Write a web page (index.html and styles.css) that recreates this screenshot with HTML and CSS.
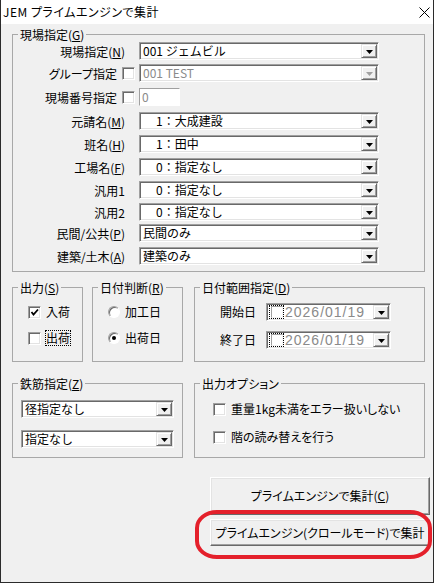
FILE: index.html
```html
<!DOCTYPE html>
<html lang="ja">
<head>
<meta charset="utf-8">
<title>JEM プライムエンジンで集計</title>
<link rel="stylesheet" href="styles.css">
</head>
<body>
<div class="window">
  <div class="titlebar">
    <span class="title">JEM プライムエンジンで集計</span>
    <svg class="close" width="11" height="11" viewBox="0 0 11 11"><path d="M0.5 0.5 L10.5 10.5 M10.5 0.5 L0.5 10.5" stroke="#000" stroke-width="1" fill="none"/></svg>
  </div>
  <div class="client">
    <fieldset class="grp g-site">
      <legend>現場指定(<u>G</u>)</legend>
      <div class="fgrid">
        <div class="lab">現場指定(<u>N</u>)</div>
        <div class="combo"><span class="ctext">001 ジェムビル</span><span class="drop"><svg width="7" height="4" viewBox="0 0 7 4"><polygon points="0,0 7,0 3.5,4" fill="#000"/></svg></span></div>

        <div class="lab lab-chk">グループ指定<span class="chk"></span></div>
        <div class="combo disabled"><span class="ctext">001 TEST</span><span class="drop"><svg width="7" height="4" viewBox="0 0 7 4"><polygon points="0,0 7,0 3.5,4" fill="#a0a0a0"/></svg></span></div>

        <div class="lab lab-chk">現場番号指定<span class="chk"></span></div>
        <div class="edit"><span class="etext">0</span></div>

        <div class="lab">元請名(<u>M</u>)</div>
        <div class="combo"><span class="ctext ind">1：大成建設</span><span class="drop"><svg width="7" height="4" viewBox="0 0 7 4"><polygon points="0,0 7,0 3.5,4" fill="#000"/></svg></span></div>

        <div class="lab">班名(<u>H</u>)</div>
        <div class="combo"><span class="ctext ind">1：田中</span><span class="drop"><svg width="7" height="4" viewBox="0 0 7 4"><polygon points="0,0 7,0 3.5,4" fill="#000"/></svg></span></div>

        <div class="lab">工場名(<u>F</u>)</div>
        <div class="combo"><span class="ctext ind">0：指定なし</span><span class="drop"><svg width="7" height="4" viewBox="0 0 7 4"><polygon points="0,0 7,0 3.5,4" fill="#000"/></svg></span></div>

        <div class="lab">汎用1</div>
        <div class="combo"><span class="ctext ind">0：指定なし</span><span class="drop"><svg width="7" height="4" viewBox="0 0 7 4"><polygon points="0,0 7,0 3.5,4" fill="#000"/></svg></span></div>

        <div class="lab">汎用2</div>
        <div class="combo"><span class="ctext ind">0：指定なし</span><span class="drop"><svg width="7" height="4" viewBox="0 0 7 4"><polygon points="0,0 7,0 3.5,4" fill="#000"/></svg></span></div>

        <div class="lab">民間/公共(<u>P</u>)</div>
        <div class="combo"><span class="ctext">民間のみ</span><span class="drop"><svg width="7" height="4" viewBox="0 0 7 4"><polygon points="0,0 7,0 3.5,4" fill="#000"/></svg></span></div>

        <div class="lab">建築/土木(<u>A</u>)</div>
        <div class="combo"><span class="ctext">建築のみ</span><span class="drop"><svg width="7" height="4" viewBox="0 0 7 4"><polygon points="0,0 7,0 3.5,4" fill="#000"/></svg></span></div>
      </div>
    </fieldset>

    <div class="grow row2">
      <fieldset class="grp g-out">
        <legend>出力(<u>S</u>)</legend>
        <div class="opts opts-out">
          <div class="opt"><span class="chk"><svg width="9" height="9" viewBox="0 0 9 9"><polyline points="1.5,4 3.5,6.5 8,1.5" fill="none" stroke="#000" stroke-width="1.8"/></svg></span><span class="otext">入荷</span></div>
          <div class="opt"><span class="chk"></span><span class="otext focus">出荷</span></div>
        </div>
      </fieldset>
      <fieldset class="grp g-judge">
        <legend>日付判断(<u>R</u>)</legend>
        <div class="opts opts-out">
          <div class="opt"><span class="radio"></span><span class="otext">加工日</span></div>
          <div class="opt"><span class="radio on"></span><span class="otext">出荷日</span></div>
        </div>
      </fieldset>
      <fieldset class="grp g-range">
        <legend>日付範囲指定(<u>D</u>)</legend>
        <div class="opts opts-range">
          <div class="drow"><span class="dlab">開始日</span>
            <div class="dtp"><span class="dfocus"><span class="dchk"></span></span><span class="dtext">2026/01/19</span><span class="drop"><svg width="7" height="4" viewBox="0 0 7 4"><polygon points="0,0 7,0 3.5,4" fill="#000"/></svg></span></div>
          </div>
          <div class="drow"><span class="dlab">終了日</span>
            <div class="dtp"><span class="dfocus"><span class="dchk"></span></span><span class="dtext">2026/01/19</span><span class="drop"><svg width="7" height="4" viewBox="0 0 7 4"><polygon points="0,0 7,0 3.5,4" fill="#000"/></svg></span></div>
          </div>
        </div>
      </fieldset>
    </div>

    <div class="grow row3">
      <fieldset class="grp g-bar">
        <legend>鉄筋指定(<u>Z</u>)</legend>
        <div class="opts opts-bar">
          <div class="combo combo-s"><span class="ctext">径指定なし</span><span class="drop"><svg width="7" height="4" viewBox="0 0 7 4"><polygon points="0,0 7,0 3.5,4" fill="#000"/></svg></span></div>
          <div class="combo combo-s"><span class="ctext">指定なし</span><span class="drop"><svg width="7" height="4" viewBox="0 0 7 4"><polygon points="0,0 7,0 3.5,4" fill="#000"/></svg></span></div>
        </div>
      </fieldset>
      <fieldset class="grp g-opt">
        <legend>出力オプション</legend>
        <div class="opts opts-opt">
          <div class="opt"><span class="chk"></span><span class="otext">重量1kg未満をエラー扱いしない</span></div>
          <div class="opt"><span class="chk"></span><span class="otext">階の読み替えを行う</span></div>
        </div>
      </fieldset>
    </div>

    <div class="buttons">
      <button class="btn btn-main">プライムエンジンで集計(<u>C</u>)</button>
      <button class="btn btn-crawl">プライムエンジン(クロールモード)で集計</button>
      <div class="highlight"></div>
    </div>
  </div>
</div>
</body>
</html>
```

FILE: styles.css
```css
html, body {
  margin: 0;
  padding: 0;
  background: #ffffff;
}
body {
  font-family: "Noto Sans CJK JP", "Noto Sans", sans-serif;
  font-size: 12px;
  color: #000;
  font-feature-settings: "palt";
}
u { text-decoration: underline; text-underline-offset: 1px; }

.window {
  width: 434px;
  height: 583px;
  box-sizing: border-box;
  border: 1px solid #2b2b2b;
  border-top: none;
  display: flex;
  flex-direction: column;
  background: #f0f0f0;
}

.titlebar {
  height: 24px;
  flex: none;
  background: #ffffff;
  display: flex;
  align-items: center;
  justify-content: space-between;
  padding: 0 3px 0 2px;
  box-sizing: border-box;
}
.title {
  font-size: 12px;
  line-height: 16px;
  letter-spacing: 0.5px;
}
.close { margin-right: 0; }

.client {
  flex: 1;
  padding-left: 11px;
  display: flex;
  flex-direction: column;
}

/* group boxes */
.grp {
  margin: 0;
  border: 1px solid #a8a8a8;
  padding: 0 0 0 5px;
  min-width: 0;
  box-sizing: border-box;
}
.grp legend {
  padding: 0 2px;
  line-height: 15px;
  font-size: 12px;
}
.g-site {
  width: 413px;
  margin-top: 3px;
  padding-bottom: 6px;
}

.fgrid {
  display: grid;
  grid-template-columns: 121px 240px;
  grid-template-rows: 22px 24px 24px 23px 23px 23px 22px 21px 23px 18px;
  align-items: start;
}
.lab {
  height: 18px;
  display: flex;
  align-items: center;
  justify-content: flex-end;
  padding-right: 14px;
  white-space: nowrap;
}
.lab-chk {
  padding-right: 4px;
  gap: 5px;
}

/* sunken edit / combo */
.combo, .edit, .dtp {
  height: 18px;
  box-sizing: border-box;
  border: 1px solid;
  border-color: #a0a0a0 #ffffff #ffffff #a0a0a0;
  box-shadow: inset 1px 1px 0 #696969, inset -1px -1px 0 #e3e3e3;
  background: #ffffff;
  display: flex;
  align-items: center;
  padding: 1px;
}
.combo { width: 240px; }
.ctext {
  flex: 1;
  line-height: 16px;
  padding-left: 2px;
  white-space: nowrap;
  font-feature-settings: normal;
}
.ctext.ind { padding-left: 15px; }
.combo.disabled .ctext { color: #8a8a8a; }

.drop {
  width: 16px;
  align-self: stretch;
  flex: none;
  box-sizing: border-box;
  background: #f0f0f0;
  border: 1px solid;
  border-color: #e3e3e3 #696969 #696969 #e3e3e3;
  box-shadow: inset 1px 1px 0 #ffffff, inset -1px -1px 0 #a0a0a0;
  display: flex;
  align-items: center;
  justify-content: center;
}
.drop svg { display: block; margin-top: 1px; }

.edit {
  width: 41px;
  border-color: #a0a0a0 #ffffff #ffffff #a0a0a0;
  box-shadow: none;
  padding: 0 0 0 2px;
}
.etext {
  line-height: 16px;
  color: #8a8a8a;
}

/* checkbox & radio */
.chk {
  width: 13px;
  height: 13px;
  flex: none;
  box-sizing: border-box;
  border: 1px solid;
  border-color: #a0a0a0 #ffffff #ffffff #a0a0a0;
  box-shadow: inset 1px 1px 0 #696969, inset -1px -1px 0 #e3e3e3;
  background: #ffffff;
  display: flex;
  align-items: center;
  justify-content: center;
}
.chk svg { display: block; }

.radio {
  width: 12px;
  height: 12px;
  flex: none;
  box-sizing: border-box;
  border-radius: 50%;
  border: 1px solid;
  border-color: #a0a0a0 #ffffff #ffffff #a0a0a0;
  box-shadow: inset 1px 1px 0 #696969;
  background: #ffffff;
  display: flex;
  align-items: center;
  justify-content: center;
}
.radio.on::after {
  content: "";
  width: 4px;
  height: 4px;
  border-radius: 50%;
  background: #000;
}

/* second row */
.grow {
  display: flex;
  align-items: flex-start;
}
.row2 { margin-top: 8px; }
.row3 { margin-top: 14px; }
.row2 .grp, .row3 .grp { height: 82px; }
.g-out { width: 71px; }
.g-judge { width: 91px; margin-left: 9px; }
.g-range { width: 231px; margin-left: 11px; }
.g-bar { width: 171px; }
.g-opt { width: 231px; margin-left: 11px; }

.opts {
  display: flex;
  flex-direction: column;
}
.opts-out { padding-top: 8px; padding-left: 10px; gap: 8px; }
.opts-range { padding-top: 8px; padding-left: 20px; gap: 10px; }
.opts-bar { padding-top: 9px; padding-left: 3px; gap: 12px; }
.opts-opt { padding-top: 9px; padding-left: 13px; gap: 10px; }

.opt {
  height: 18px;
  display: flex;
  align-items: center;
  gap: 4px;
  white-space: nowrap;
}
.otext { line-height: 16px; padding: 0 1px; }
.otext.focus { outline: 1px dotted #000; outline-offset: -1px; }

.drow {
  height: 18px;
  display: flex;
  align-items: center;
  gap: 10px;
}
.dlab { width: 36px; line-height: 16px; }
.dtp {
  width: 125px;
  padding: 1px 1px 1px 2px;
}
.dfocus {
  width: 15px;
  height: 14px;
  flex: none;
  box-sizing: border-box;
  outline: 1px dotted #000;
  outline-offset: -1px;
  display: flex;
  align-items: center;
  justify-content: center;
}
.dchk {
  width: 12px;
  height: 12px;
  box-sizing: border-box;
  border: 1px solid;
  border-color: #a0a0a0 #f4f4f4 #f4f4f4 #a0a0a0;
  background: #ffffff;
}
.dtext {
  flex: 1;
  font-family: "Liberation Sans", sans-serif;
  font-size: 14px;
  letter-spacing: 1px;
  color: #8a8a8a;
  line-height: 16px;
  padding-left: 1px;
  white-space: nowrap;
}

.combo-s { width: 153px; }

/* buttons */
.buttons {
  position: relative;
  margin-top: 19px;
  display: flex;
  flex-direction: column;
  align-items: flex-end;
  padding-right: 3px;
  gap: 4px;
}
.btn {
  width: 220px;
  margin: 0;
  box-sizing: border-box;
  font-family: "Noto Sans CJK JP", sans-serif;
  font-size: 12px;
  font-feature-settings: "palt";
  color: #000;
  background: #f0f0f0;
  border: 1px solid;
  border-color: #ffffff #696969 #696969 #ffffff;
  box-shadow: inset -1px -1px 0 #a0a0a0, inset 1px 1px 0 #e3e3e3;
  padding: 0;
  line-height: 16px;
}
.btn-main { height: 38px; }
.btn-crawl { height: 27px; }

.highlight {
  position: absolute;
  left: 183px;
  top: 33px;
  width: 237px;
  height: 49px;
  box-sizing: border-box;
  border: 4px solid #e4202b;
  border-radius: 22px / 18px;
}
```
